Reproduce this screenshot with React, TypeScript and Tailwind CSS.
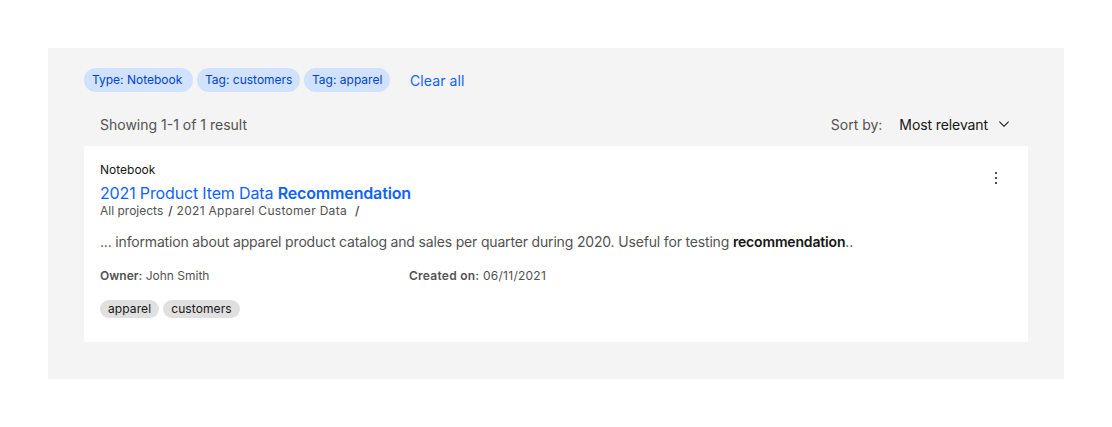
import React from "react";

const font = { fontFamily: "Inter, 'Noto Sans', sans-serif" };

const filters = [
    { label: "Type: Notebook", w: "w-[109px]" },
    { label: "Tag: customers", w: "w-[103px]" },
    { label: "Tag: apparel", w: "w-[86px]" },
];
const tags = ["apparel", "customers"];

const App = () => {
    return (
        <div className="w-[1112px] h-[427px] bg-white p-12" style={font}>
            {/* Results panel */}
            <div className="bg-[#f4f4f4] px-9 pt-5 pb-[37px]">
                {/* Active filters */}
                <div className="flex items-center h-6">
                    <div className="flex gap-1">
                        {filters.map((f) => (
                            <span
                                key={f.label}
                                className={`inline-flex items-center h-6 pl-2 rounded-full bg-[#d0e2ff] text-[#0043ce] text-[12px] whitespace-nowrap ${f.w}`}
                            >
                                {f.label}
                            </span>
                        ))}
                    </div>
                    <button className="ml-5 text-[14px] text-[#0f62fe] tracking-[0.1px]">Clear all</button>
                </div>

                {/* Count + sort */}
                <div className="flex items-center justify-between h-[54px] pt-[10px] px-4">
                    <span className="text-[14px] text-[#525252]">Showing 1-1 of 1 result</span>
                    <div className="flex items-center">
                        <span className="text-[14px] text-[#525252] mr-[17px]">Sort by:</span>
                        <button className="flex items-center text-[14px] text-[#161616] tracking-[-0.1px]">
                            Most relevant
                            <svg className="ml-2" width="16" height="16" viewBox="0 0 16 16" fill="#161616">
                                <path d="M8 11L3 6 3.7 5.3 8 9.6 12.3 5.3 13 6z" />
                            </svg>
                        </button>
                    </div>
                </div>

                {/* Result card */}
                <div className="bg-white pt-4 px-4 pb-6 flex">
                    <div className="flex-1">
                        <div className="text-[12px] leading-4 text-[#161616]">Notebook</div>
                        <a className="block mt-[5px] text-[16px] leading-5 text-[#0f62fe] tracking-[-0.15px]">
                            2021 Product Item Data <span className="font-semibold">Recommendation</span>
                        </a>
                        <div className="flex items-center text-[12px] leading-4 text-[#525252]">
                            <span>All projects</span>
                            <span className="ml-[5px] mr-[4px] text-[#161616]">/</span>
                            <span className="tracking-[0.3px]">2021 Apparel Customer Data</span>
                            <span className="ml-[8px] text-[#161616]">/</span>
                        </div>
                        <p className="mt-[13px] text-[14px] leading-5 text-[#525252] tracking-[-0.17px]">
                            ... information about apparel product catalog and sales per quarter during 2020. Useful for testing{" "}
                            <span className="font-semibold text-[#161616]">recommendation</span>..
                        </p>
                        <div className="mt-[16px] flex text-[12px] leading-4 text-[#525252]">
                            <div className="w-[309px]">
                                <span className="font-semibold">Owner:</span> John Smith
                            </div>
                            <div className="tracking-[0.25px]">
                                <span className="font-semibold">Created on:</span> 06/11/2021
                            </div>
                        </div>
                        <div className="mt-[16px] flex gap-1">
                            {tags.map((t) => (
                                <span
                                    key={t}
                                    className="inline-flex items-center h-[18px] px-2 rounded-full bg-[#e0e0e0] text-[#161616] text-[12px] tracking-[0.1px]"
                                >
                                    {t}
                                </span>
                            ))}
                        </div>
                    </div>

                    {/* Overflow menu */}
                    <button className="w-8 h-8 flex items-center justify-center">
                        <svg width="16" height="16" viewBox="0 0 16 16" fill="#161616">
                            <circle cx="8" cy="3" r="1" />
                            <circle cx="8" cy="8" r="1" />
                            <circle cx="8" cy="13" r="1" />
                        </svg>
                    </button>
                </div>
            </div>
        </div>
    );
};

export default App;
